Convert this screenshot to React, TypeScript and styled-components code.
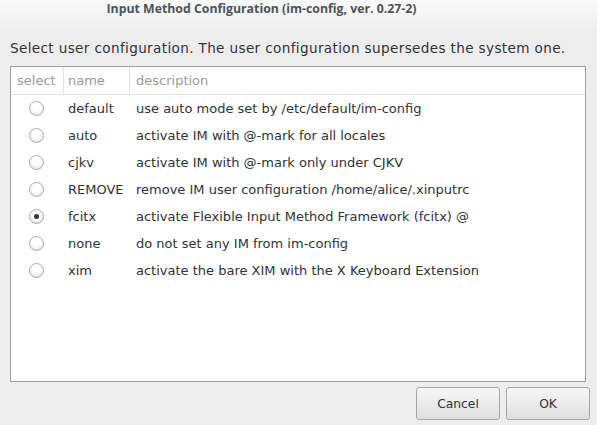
import React from "react";
import styled, { createGlobalStyle } from "styled-components";

const Global = createGlobalStyle`
  html, body { margin: 0; padding: 0; }
  body { background: #ededed; font-family: "DejaVu Sans", sans-serif; }
`;

const Window = styled.div`
  width: 597px;
  height: 425px;
  display: flex;
  flex-direction: column;
  background: #ededed;
  overflow: hidden;
`;

const TitleBar = styled.div`
  height: 36px;
  flex: none;
  display: flex;
  justify-content: center;
  padding-right: 74px;
  background: linear-gradient(#fafafa, #ededed);
  font-family: "Open Sans", sans-serif;
  font-weight: 700;
  font-size: 12.3px;
  color: #4c5458;
  line-height: 18px;
`;

const Body = styled.div`
  flex: 1;
  display: flex;
  flex-direction: column;
  padding: 4px 7px 6px 10px;
`;

const Intro = styled.div`
  font-size: 13.6px;
  letter-spacing: 0.35px;
  color: #2e3436;
  line-height: 16px;
  height: 26px;
  white-space: nowrap;
`;

const ListBox = styled.div`
  width: 576px;
  height: 316px;
  border: 1px solid #a1a1a1;
  background: #fff;
  box-sizing: border-box;
`;

const Grid = styled.div`
  display: grid;
  grid-template-columns: 53px 66px 1fr;
`;

const HeaderCell = styled.div<{ $last?: boolean; $pad: number }>`
  height: 28px;
  box-sizing: border-box;
  border-bottom: 1px solid #e3e3e3;
  border-right: ${(p) => (p.$last ? "none" : "1px solid #e3e3e3")};
  color: #9a9a9a;
  font-size: 13px;
  display: flex;
  align-items: center;
  padding-left: ${(p) => p.$pad}px;
  padding-bottom: 1px;
`;

const Cell = styled.div<{ $pad: number }>`
  height: 27px;
  display: flex;
  align-items: center;
  padding-left: ${(p) => p.$pad}px;
  font-size: 13px;
  color: #2e3436;
  white-space: nowrap;
`;

const RadioCell = styled.div`
  height: 27px;
  display: flex;
  align-items: center;
  justify-content: center;
  padding-right: 2px;
`;

const Radio = styled.span<{ $checked?: boolean }>`
  width: 13px;
  height: 13px;
  border-radius: 50%;
  border: 1px solid #acacac;
  background: radial-gradient(circle at 50% 35%, #ffffff 35%, #e4e4e4 100%);
  box-shadow: inset 0 -1px 1px rgba(0, 0, 0, 0.05);
  display: flex;
  align-items: center;
  justify-content: center;
  &::after {
    content: "";
    display: ${(p) => (p.$checked ? "block" : "none")};
    width: 5px;
    height: 5px;
    border-radius: 50%;
    background: #2e3436;
  }
`;

const ButtonRow = styled.div`
  display: flex;
  justify-content: flex-end;
  gap: 6px;
  margin-top: 5px;
`;

const Button = styled.button`
  width: 84px;
  height: 33px;
  box-sizing: border-box;
  border: 1px solid #a6a6a6;
  border-radius: 3px;
  background: linear-gradient(#f6f6f6, #e0e0e0);
  font-family: "DejaVu Sans", sans-serif;
  font-size: 12.3px;
  color: #2e3436;
  padding: 0;
`;

const rows = [
  ["default", "use auto mode set by /etc/default/im-config"],
  ["auto", "activate IM with @-mark for all locales"],
  ["cjkv", "activate IM with @-mark only under CJKV"],
  ["REMOVE", "remove IM user configuration /home/alice/.xinputrc"],
  ["fcitx", "activate Flexible Input Method Framework (fcitx) @"],
  ["none", "do not set any IM from im-config"],
  ["xim", "activate the bare XIM with the X Keyboard Extension"],
];

export default function App() {
  return (
    <Window>
      <Global />
      <TitleBar>Input Method Configuration (im-config, ver. 0.27-2)</TitleBar>
      <Body>
        <Intro>Select user configuration. The user configuration supersedes the system one.</Intro>
        <ListBox>
          <Grid>
            <HeaderCell $pad={6}>select</HeaderCell>
            <HeaderCell $pad={4}>name</HeaderCell>
            <HeaderCell $pad={6} $last>description</HeaderCell>
            {rows.map(([n, d]) => (
              <React.Fragment key={n}>
                <RadioCell>
                  <Radio $checked={n === "fcitx"} />
                </RadioCell>
                <Cell $pad={4}>{n}</Cell>
                <Cell $pad={6}>{d}</Cell>
              </React.Fragment>
            ))}
          </Grid>
        </ListBox>
        <ButtonRow>
          <Button>Cancel</Button>
          <Button>OK</Button>
        </ButtonRow>
      </Body>
    </Window>
  );
}
